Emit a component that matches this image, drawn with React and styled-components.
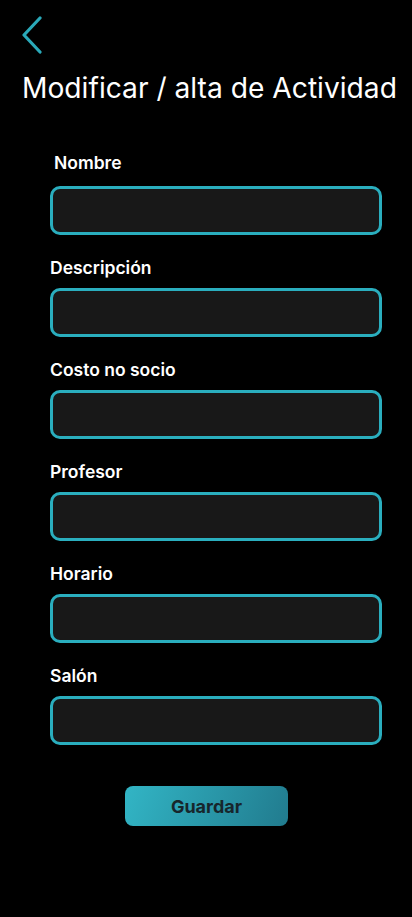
import React from "react";
import styled, { createGlobalStyle } from "styled-components";

const GlobalStyle = createGlobalStyle`
  html, body {
    margin: 0;
    padding: 0;
    background: #000;
  }
  body {
    font-family: Inter, "Noto Sans", "Liberation Sans", sans-serif;
    color: #fff;
  }
`;

const fields = [
  { id: "nombre", label: "Nombre", indent: 4, first: true },
  { id: "descripcion", label: "Descripción" },
  { id: "costo", label: "Costo no socio" },
  { id: "profesor", label: "Profesor" },
  { id: "horario", label: "Horario" },
  { id: "salon", label: "Salón" },
];

function App() {
  /** */
  const handleSubmit = (e) => {
    e.preventDefault();
  };

  return (
    <>
      <GlobalStyle />
      <Page>
        <Header>
          <BackButton type="button" aria-label="Volver">
            <svg width="24" height="38" viewBox="0 0 24 38" fill="none">
              <path
                d="M20 2 L4 19 L20 36"
                stroke="#2aa9b9"
                strokeWidth="3.2"
                strokeLinecap="round"
                strokeLinejoin="round"
              />
            </svg>
          </BackButton>
          <Title>Modificar / alta de Actividad</Title>
        </Header>
        <FormWrapper onSubmit={handleSubmit}>
          {fields.map((f) => (
            <Field key={f.id}>
              <Label htmlFor={f.id} $indent={f.indent} $first={f.first}>
                {f.label}
              </Label>
              <Input id={f.id} type="text" />
            </Field>
          ))}
          <SaveButton type="submit">Guardar</SaveButton>
        </FormWrapper>
      </Page>
    </>
  );
}

export default App;

const Page = styled.div`
  width: 412px;
  min-height: 917px;
  background: #000;
`;

const Header = styled.header`
  display: flex;
  flex-direction: column;
  padding: 16px 0 0 20px;
`;

const BackButton = styled.button`
  width: 24px;
  height: 38px;
  padding: 0;
  margin: 0;
  border: none;
  background: transparent;
  cursor: pointer;
  display: flex;
`;

const Title = styled.h1`
  margin: 17px 0 0 2px;
  font-size: 28.2px;
  font-weight: 400;
  line-height: 34px;
  letter-spacing: 0;
  color: #fff;
  white-space: nowrap;
`;

const FormWrapper = styled.form`
  display: flex;
  flex-direction: column;
  padding: 48px 0 0 50px;
`;

const Field = styled.div`
  display: flex;
  flex-direction: column;
  width: 332px;
  margin-bottom: 23px;
`;

const Label = styled.label`
  font-size: 17.5px;
  font-weight: 600;
  line-height: 20px;
  color: #fff;
  padding-left: ${(p) => p.$indent || 0}px;
  margin-bottom: ${(p) => (p.$first ? 13 : 10)}px;
`;

const Input = styled.input`
  box-sizing: border-box;
  width: 332px;
  height: 49px;
  background: #181818;
  border: 3px solid #2aaebe;
  border-radius: 10px;
  color: #fff;
  font-size: 16px;
  padding: 0 12px;
  outline: none;
`;

const SaveButton = styled.button`
  align-self: flex-start;
  margin: 18px 0 0 75px;
  width: 163px;
  height: 40px;
  border: none;
  border-radius: 8px;
  background: linear-gradient(110deg, #32b5c5 0%, #217b8e 100%);
  color: #17262c;
  font-family: Inter, "Noto Sans", "Liberation Sans", sans-serif;
  font-size: 18px;
  font-weight: 700;
  cursor: pointer;
`;
